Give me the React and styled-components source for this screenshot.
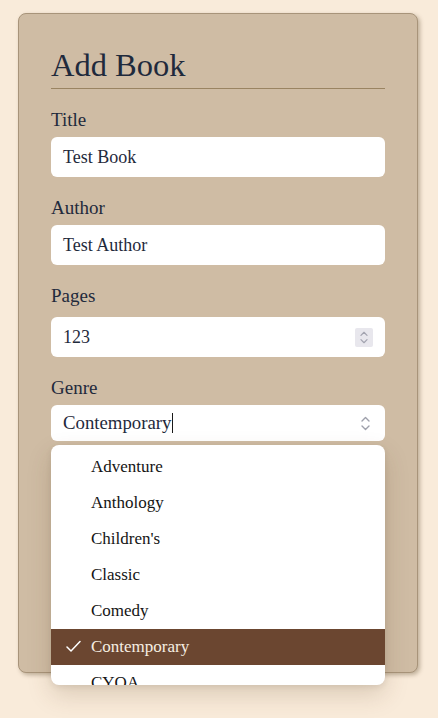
import styled, { createGlobalStyle } from "styled-components";

const GlobalStyle = createGlobalStyle`
  html, body {
    margin: 0;
    padding: 0;
    background: #f9ebda;
  }
  body {
    font-family: "Liberation Serif", "DejaVu Serif", serif;
    color: #1f2a3c;
  }
`;

const Page = styled.div`
  padding: 13px 18px;
  min-height: 718px;
  box-sizing: border-box;
`;

const Card = styled.form`
  width: 400px;
  box-sizing: border-box;
  background: #cfbca4;
  border: 1px solid #a8947a;
  border-radius: 8px;
  box-shadow: 2px 2px 4px rgba(80, 60, 30, 0.35);
  padding: 33px 32px 33px;
  display: flex;
  flex-direction: column;
`;

const Heading = styled.h1`
  margin: 0;
  font-size: 32.5px;
  line-height: 36px;
  font-weight: 400;
  padding-bottom: 5px;
  border-bottom: 1px solid #9a8462;
  color: #1f2a3c;
`;

const Field = styled.div`
  position: relative;
  display: flex;
  flex-direction: column;
  margin-top: 19px;
`;

const Label = styled.label`
  font-size: 19px;
  line-height: 24px;
  margin-bottom: ${(p) => (p.$gap ? p.$gap : 5)}px;
`;

const InputBox = styled.div`
  height: ${(p) => (p.$h ? p.$h : 40)}px;
  background: #fff;
  border-radius: 6px;
  display: flex;
  align-items: center;
  padding: 0 12px;
  font-size: ${(p) => (p.$fs ? p.$fs : 18)}px;
  color: #1f2a3c;
`;

const Value = styled.span`
  flex: 1;
  display: flex;
  align-items: center;
`;

const Caret = styled.span`
  display: inline-block;
  width: 0;
  height: 20px;
  border-left: 1px solid #1a1a1a;
`;

const Spinner = styled.span`
  width: 18px;
  height: 19px;
  background: #e8e7ed;
  border-radius: 2px;
  display: flex;
  align-items: center;
  justify-content: center;
`;

const SelectArrows = styled.span`
  width: 18px;
  display: flex;
  align-items: center;
  justify-content: center;
  margin-right: -1px;
`;

const Textarea = styled.div`
  height: 80px;
  background: #fff;
  border-radius: 6px;
`;

const Submit = styled.button`
  margin-top: 26px;
  height: 44px;
  border: none;
  border-radius: 6px;
  background: #6b4630;
  color: #fff;
  font-family: inherit;
  font-size: 18px;
`;

const Menu = styled.ul`
  position: absolute;
  left: 0;
  right: 0;
  top: calc(100% + 4px);
  height: 240px;
  margin: 0;
  padding: 4px 0 0;
  list-style: none;
  background: #fff;
  border-radius: 8px;
  overflow: hidden;
  box-sizing: border-box;
  box-shadow: 0 10px 24px rgba(90, 60, 30, 0.18), 0 2px 6px rgba(0, 0, 0, 0.08);
  z-index: 2;
`;

const Option = styled.li`
  position: relative;
  height: 36px;
  flex-shrink: 0;
  display: flex;
  align-items: center;
  padding-left: 40px;
  font-size: 17px;
  color: ${(p) => (p.$selected ? "#f6eee2" : "#141414")};
  background: ${(p) => (p.$selected ? "#6b4630" : "transparent")};
`;

const CheckMark = styled.svg`
  position: absolute;
  left: 15px;
  top: 11px;
`;

function Chevrons({ color = "#9ea0ab", w = 9, h = 15 }) {
  return (
    <svg width={w} height={h} viewBox="0 0 9 15" fill="none">
      <polyline points="1,5 4.5,1.5 8,5" stroke={color} strokeWidth="1.4" strokeLinecap="round" strokeLinejoin="round" />
      <polyline points="1,10 4.5,13.5 8,10" stroke={color} strokeWidth="1.4" strokeLinecap="round" strokeLinejoin="round" />
    </svg>
  );
}

const genres = ["Adventure", "Anthology", "Children's", "Classic", "Comedy", "Contemporary", "CYOA"];

export default function App() {
  return (
    <>
      <GlobalStyle />
      <Page>
        <Card onSubmit={(e) => e.preventDefault()}>
          <Heading>Add Book</Heading>
          <Field>
            <Label>Title</Label>
            <InputBox>
              <Value>Test Book</Value>
            </InputBox>
          </Field>
          <Field>
            <Label>Author</Label>
            <InputBox>
              <Value>Test Author</Value>
            </InputBox>
          </Field>
          <Field>
            <Label $gap={9}>Pages</Label>
            <InputBox>
              <Value>123</Value>
              <Spinner>
                <Chevrons w={8} h={13} color="#a3a4b0" />
              </Spinner>
            </InputBox>
          </Field>
          <Field>
            <Label>Genre</Label>
            <InputBox $h={36} $fs={18.8}>
              <Value>
                Contemporary
                <Caret />
              </Value>
              <SelectArrows>
                <Chevrons />
              </SelectArrows>
            </InputBox>
            <Menu>
              {genres.map((g) => (
                <Option key={g} $selected={g === "Contemporary"}>
                  {g === "Contemporary" && (
                    <CheckMark width="15" height="13" viewBox="0 0 15 13" fill="none">
                      <polyline points="1,7 5,11 14,1.5" stroke="#fff" strokeWidth="1.5" strokeLinecap="round" strokeLinejoin="round" />
                    </CheckMark>
                  )}
                  {g}
                </Option>
              ))}
            </Menu>
          </Field>
          <Field>
            <Label>Notes</Label>
            <Textarea />
          </Field>
          <Submit type="submit">Add Book</Submit>
        </Card>
      </Page>
    </>
  );
}
